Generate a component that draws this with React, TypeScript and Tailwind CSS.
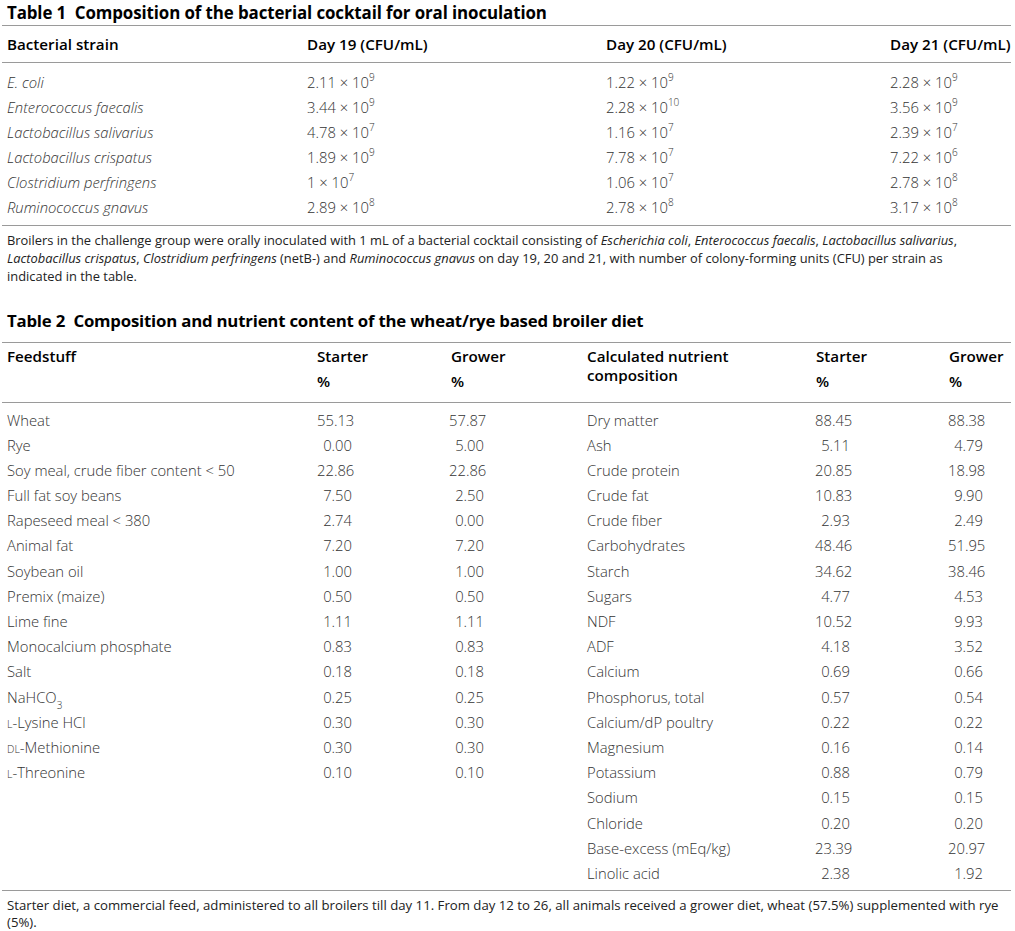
import React from "react";

const Sup = ({ children }: { children: React.ReactNode }) => (
  <sup className="text-[10px] relative top-[-1px] align-super leading-none">{children}</sup>
);

const Sci = ({ m, e }: { m: string; e: string }) => (
  <span>
    {m} × 10<Sup>{e}</Sup>
  </span>
);

const t1: [string, [string, string], [string, string], [string, string]][] = [
  ["E. coli", ["2.11", "9"], ["1.22", "9"], ["2.28", "9"]],
  ["Enterococcus faecalis", ["3.44", "9"], ["2.28", "10"], ["3.56", "9"]],
  ["Lactobacillus salivarius", ["4.78", "7"], ["1.16", "7"], ["2.39", "7"]],
  ["Lactobacillus crispatus", ["1.89", "9"], ["7.78", "7"], ["7.22", "6"]],
  ["Clostridium perfringens", ["1", "7"], ["1.06", "7"], ["2.78", "8"]],
  ["Ruminococcus gnavus", ["2.89", "8"], ["2.78", "8"], ["3.17", "8"]],
];

const SC = ({ children }: { children: React.ReactNode }) => (
  <span className="text-[10.5px] uppercase">{children}</span>
);

const feed: [React.ReactNode, string, string][] = [
  ["Wheat", "55.13", "57.87"],
  ["Rye", "0.00", "5.00"],
  ["Soy meal, crude fiber content < 50", "22.86", "22.86"],
  ["Full fat soy beans", "7.50", "2.50"],
  ["Rapeseed meal < 380", "2.74", "0.00"],
  ["Animal fat", "7.20", "7.20"],
  ["Soybean oil", "1.00", "1.00"],
  ["Premix (maize)", "0.50", "0.50"],
  ["Lime fine", "1.11", "1.11"],
  ["Monocalcium phosphate", "0.83", "0.83"],
  ["Salt", "0.18", "0.18"],
  [
    <span>
      NaHCO<sub className="text-[10px] align-sub leading-none">3</sub>
    </span>,
    "0.25",
    "0.25",
  ],
  [
    <span>
      <SC>l</SC>-Lysine HCl
    </span>,
    "0.30",
    "0.30",
  ],
  [
    <span>
      <SC>dl</SC>-Methionine
    </span>,
    "0.30",
    "0.30",
  ],
  [
    <span>
      <SC>l</SC>-Threonine
    </span>,
    "0.10",
    "0.10",
  ],
];

const nut: [string, string, string][] = [
  ["Dry matter", "88.45", "88.38"],
  ["Ash", "5.11", "4.79"],
  ["Crude protein", "20.85", "18.98"],
  ["Crude fat", "10.83", "9.90"],
  ["Crude fiber", "2.93", "2.49"],
  ["Carbohydrates", "48.46", "51.95"],
  ["Starch", "34.62", "38.46"],
  ["Sugars", "4.77", "4.53"],
  ["NDF", "10.52", "9.93"],
  ["ADF", "4.18", "3.52"],
  ["Calcium", "0.69", "0.66"],
  ["Phosphorus, total", "0.57", "0.54"],
  ["Calcium/dP poultry", "0.22", "0.22"],
  ["Magnesium", "0.16", "0.14"],
  ["Potassium", "0.88", "0.79"],
  ["Sodium", "0.15", "0.15"],
  ["Chloride", "0.20", "0.20"],
  ["Base-excess (mEq/kg)", "23.39", "20.97"],
  ["Linolic acid", "2.38", "1.92"],
];

export default function App() {
  return (
    <div
      className="w-[1015px] h-[931px] bg-white overflow-hidden text-[#333] font-light"
      style={{ fontFamily: '"Open Sans", "Noto Sans", sans-serif' }}
    >
      {/* Table 1 */}
      <div className="pt-[2px] pl-[7px] text-[16.9px] font-bold text-black h-[25px] leading-[22px] tracking-[-0.1px]">
        Table 1&nbsp;&nbsp;Composition of the bacterial cocktail for oral inoculation
      </div>
      <div className="mx-[2px] w-[1009px] border-t border-[#9a9a9a]" />
      <div className="grid grid-cols-[300px_299px_284px_1fr] pl-[7px] h-[36px] items-center text-[15.2px] font-semibold text-black">
        <div>Bacterial strain</div>
        <div>Day 19 (CFU/mL)</div>
        <div>Day 20 (CFU/mL)</div>
        <div className="whitespace-nowrap">Day 21 (CFU/mL)</div>
      </div>
      <div className="mx-[2px] w-[1009px] border-t border-[#9a9a9a]" />
      <div className="pt-[7px] pb-[5px] pl-[7px] text-[14.8px]">
        {t1.map((r) => (
          <div key={r[0]} className="grid grid-cols-[300px_299px_284px_1fr] h-[25px] items-center">
            <div className="italic">{r[0]}</div>
            <div>
              <Sci m={r[1][0]} e={r[1][1]} />
            </div>
            <div>
              <Sci m={r[2][0]} e={r[2][1]} />
            </div>
            <div>
              <Sci m={r[3][0]} e={r[3][1]} />
            </div>
          </div>
        ))}
      </div>
      <div className="mx-[2px] w-[1009px] border-t border-[#9a9a9a]" />
      <p className="pt-[5px] pl-[7px] pr-[4px] text-[12.9px] leading-[18px] font-normal text-[#222] whitespace-nowrap">
        Broilers in the challenge group were orally inoculated with 1 mL of a bacterial cocktail consisting of{" "}
        <i>Escherichia coli</i>, <i>Enterococcus faecalis</i>, <i>Lactobacillus salivarius</i>,
        <br />
        <i>Lactobacillus crispatus</i>, <i>Clostridium perfringens</i> (netB-) and <i>Ruminococcus gnavus</i> on day
        19, 20 and 21, with number of colony-forming units (CFU) per strain as
        <br />
        indicated in the table.
      </p>

      {/* Table 2 */}
      <div className="mt-[25px] pl-[7px] text-[16.8px] font-bold text-black h-[22px] leading-[22px] tracking-[-0.2px]">
        Table 2&nbsp;&nbsp;Composition and nutrient content of the wheat/rye based broiler diet
      </div>
      <div className="mt-[10px] mx-[2px] w-[1009px] border-t border-[#9a9a9a]" />
      <div className="grid grid-cols-[310px_134px_136px_229px_133px_1fr] pl-[7px] pt-[1px] h-[59px] text-[15.2px] font-semibold text-black">
        <div className="leading-[25px]">Feedstuff</div>
        <div className="leading-[25px]">
          <div>Starter</div>
          <div>%</div>
        </div>
        <div className="leading-[25px]">
          <div>Grower</div>
          <div>%</div>
        </div>
        <div className="leading-[19px] pt-[3px]">
          <div>Calculated nutrient</div>
          <div>composition</div>
        </div>
        <div className="leading-[25px]">
          <div>Starter</div>
          <div>%</div>
        </div>
        <div className="leading-[25px]">
          <div>Grower</div>
          <div>%</div>
        </div>
      </div>
      <div className="mx-[2px] w-[1009px] border-t border-[#9a9a9a]" />
      <div className="grid grid-cols-[580px_1fr] pt-[4px] pb-[4px] text-[14.8px]">
        <div>
          {feed.map((r, i) => (
            <div key={i} className="grid grid-cols-[310px_35px_97px_35px] pl-[7px] h-[25.2px] items-center">
              <div className="whitespace-nowrap">{r[0]}</div>
              <div className="text-right">{r[1]}</div>
              <div />
              <div className="text-right">{r[2]}</div>
            </div>
          ))}
        </div>
        <div>
          {nut.map((r, i) => (
            <div key={i} className="grid grid-cols-[7px_228px_35px_98px_35px] h-[25.2px] items-center">
              <div />
              <div className="whitespace-nowrap">{r[0]}</div>
              <div className="text-right">{r[1]}</div>
              <div />
              <div className="text-right">{r[2]}</div>
            </div>
          ))}
        </div>
      </div>
      <div className="mx-[2px] w-[1009px] border-t border-[#9a9a9a]" />
      <p className="pt-[6px] pl-[7px] pr-[4px] text-[13.2px] leading-[17px] font-normal text-[#222] whitespace-nowrap">
        Starter diet, a commercial feed, administered to all broilers till day 11. From day 12 to 26, all animals
        received a grower diet, wheat (57.5%) supplemented with rye
        <br />
        (5%).
      </p>
    </div>
  );
}
